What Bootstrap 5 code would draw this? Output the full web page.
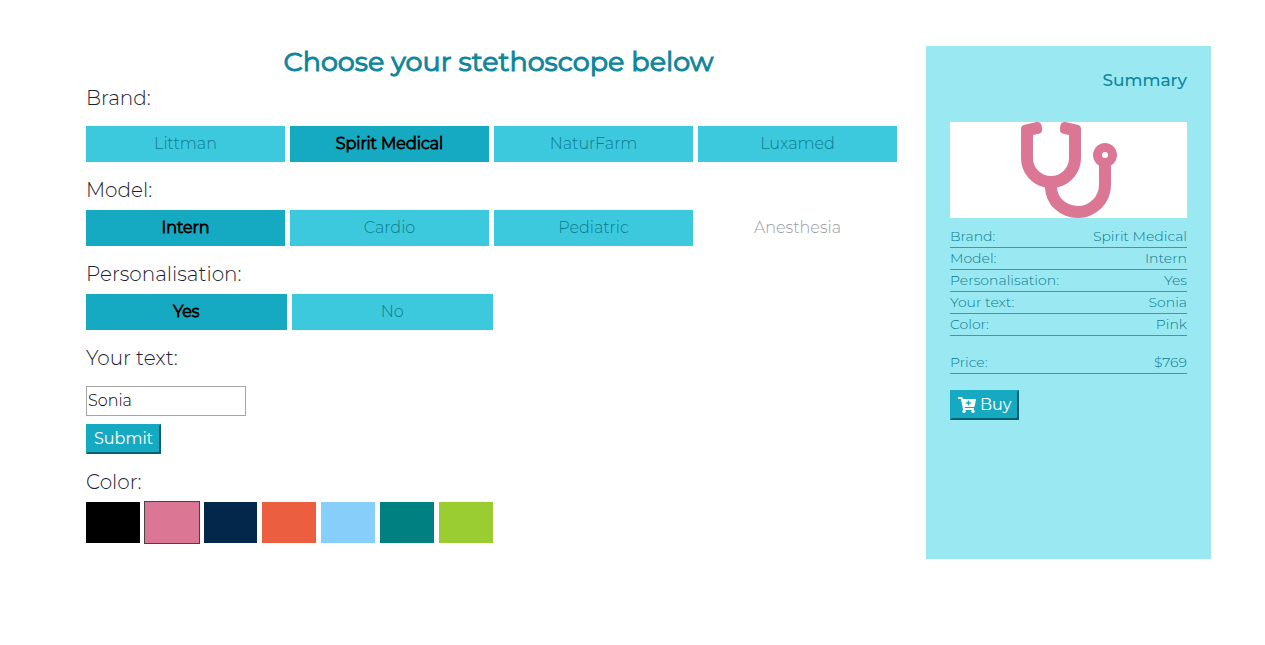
<!DOCTYPE html>
<html lang="en">
<head>
<meta charset="utf-8">
<meta name="viewport" content="width=device-width, initial-scale=1">
<title>Choose your stethoscope</title>
<link rel="stylesheet" href="https://cdn.jsdelivr.net/npm/bootstrap@5.3.0/dist/css/bootstrap.min.css">
<style>
  :root { --teal: #16aac2; --teal-light: #3dc9dd; --teal-dark: #0d869b; --ice: #9ae9f2; }
  body { font-family: Montserrat, Inter, "Open Sans", sans-serif; font-weight: 300; color: #000; }
  .page { padding: 46px 54px 46px 86px; }
  .shop { display: grid; grid-template-columns: 1fr; gap: 29px; }
  @media (min-width: 768px) { .shop { grid-template-columns: 74fr 26fr; } }
  .main-title { font-size: 27px; line-height: 32px; font-weight: 400; -webkit-text-stroke: 1px; color: var(--teal-dark); padding-left: 14px; }
  .group-title { font-size: 20px; line-height: 24px; float: none; color: #1b2033; }
  .choices { display: grid; grid-template-columns: repeat(4, 1fr); gap: 5px; }
  .half { width: calc(50% + 1px); min-width: 280px; }
  .choices.two { grid-template-columns: repeat(2, 1fr); }
  .choices.seven { grid-template-columns: repeat(7, 1fr); }
  .choice { height: 36px; line-height: 35px; font-size: 16px; text-align: center; background: var(--teal-light); color: #0b7b8f; cursor: pointer; }
  .btn-check:checked + .choice { background: var(--teal); color: #000; -webkit-text-stroke: 1px; }
  .btn-check:disabled + .choice { background: none; color: #999ba3; cursor: default; opacity: 1; }
  .btn-check:focus-visible + label { outline: 2px solid #000; }
  .swatch { height: 41px; cursor: pointer; }
  .btn-check:checked + .swatch { outline: 1px solid #444; }
  .engraving { width: 160px; height: 30px; padding: 0 1px 2px; border: 1px solid #a5a5a5; font-size: 16px; font-weight: 300; color: #000; }
  .action { height: 30px; padding: 0 6px; line-height: 24px; font-size: 16px; font-weight: 400; color: #fff; background: var(--teal); border: 2px solid; border-color: var(--teal) #0b5f6d #0b5f6d var(--teal); }
  .summary { background: var(--ice); color: var(--teal-dark); }
  .summary-title { font-size: 17px; line-height: 20px; font-weight: 500; }
  .preview { height: 96px; }
  .details { font-size: 14px; line-height: 20px; color: #0b7b8f; }
  .details th { font-weight: inherit; }
  .details tr { border-bottom: 1px solid var(--teal); }
  .details th, .details td { padding: 0 0 1px; }
</style>
</head>
<body>
<div class="page">
  <div class="shop">
    <main class="pb-3">
      <h1 class="main-title text-center mb-2">Choose your stethoscope below</h1>
      <form onsubmit="return false">
        <fieldset class="mb-3">
          <legend class="group-title mb-3">Brand:</legend>
          <div class="choices">
            <input class="btn-check" type="radio" name="brand" id="b1"><label class="choice" for="b1">Littman</label>
            <input class="btn-check" type="radio" name="brand" id="b2" checked><label class="choice" for="b2">Spirit Medical</label>
            <input class="btn-check" type="radio" name="brand" id="b3"><label class="choice" for="b3">NaturFarm</label>
            <input class="btn-check" type="radio" name="brand" id="b4"><label class="choice" for="b4">Luxamed</label>
          </div>
        </fieldset>
        <fieldset class="mb-3">
          <legend class="group-title mb-2">Model:</legend>
          <div class="choices">
            <input class="btn-check" type="radio" name="model" id="m1" checked><label class="choice" for="m1">Intern</label>
            <input class="btn-check" type="radio" name="model" id="m2"><label class="choice" for="m2">Cardio</label>
            <input class="btn-check" type="radio" name="model" id="m3"><label class="choice" for="m3">Pediatric</label>
            <input class="btn-check" type="radio" name="model" id="m4" disabled><label class="choice" for="m4">Anesthesia</label>
          </div>
        </fieldset>
        <fieldset class="mb-3">
          <legend class="group-title mb-2">Personalisation:</legend>
          <div class="choices two half">
            <input class="btn-check" type="radio" name="personal" id="p1" checked><label class="choice" for="p1">Yes</label>
            <input class="btn-check" type="radio" name="personal" id="p2"><label class="choice" for="p2">No</label>
          </div>
        </fieldset>
        <div class="d-flex flex-column align-items-start mb-3">
          <label class="group-title mb-3" for="engraving">Your text:</label>
          <input class="engraving mb-2" type="text" id="engraving" value="Sonia">
          <button class="action" type="submit">Submit</button>
        </div>
        <fieldset>
          <legend class="group-title mb-2">Color:</legend>
          <div class="choices seven half">
            <input class="btn-check" type="radio" name="color" id="c1"><label class="swatch" for="c1" aria-label="Black" style="background:#000"></label>
            <input class="btn-check" type="radio" name="color" id="c2" checked><label class="swatch" for="c2" aria-label="Pink" style="background:#db7695"></label>
            <input class="btn-check" type="radio" name="color" id="c3"><label class="swatch" for="c3" aria-label="Navy" style="background:#02274b"></label>
            <input class="btn-check" type="radio" name="color" id="c4"><label class="swatch" for="c4" aria-label="Orange" style="background:#eb5e40"></label>
            <input class="btn-check" type="radio" name="color" id="c5"><label class="swatch" for="c5" aria-label="Light blue" style="background:#87cefa"></label>
            <input class="btn-check" type="radio" name="color" id="c6"><label class="swatch" for="c6" aria-label="Teal" style="background:#008080"></label>
            <input class="btn-check" type="radio" name="color" id="c7"><label class="swatch" for="c7" aria-label="Green" style="background:#9acd32"></label>
          </div>
        </fieldset>
      </form>
    </main>
    <aside class="summary p-4">
      <h2 class="summary-title text-end pb-3 mb-3">Summary</h2>
      <div class="preview bg-white d-flex justify-content-center mb-2">
        <svg width="96" height="96" viewBox="0 0 96 96" fill="#db7695" aria-hidden="true">
          <path d="M0 7Q0 3.500 3.500 2.700L15.500.1Q19.500-.5 20.600 3.500L21.100 7Q21.400 10.800 18 11.800L12 13V36a18 18 0 0 0 36 0V13l-6-1.200Q38.600 10.800 38.900 7L39.400 3.500Q40.500-.5 44.500.1L56.500 2.700Q60 3.500 60 7V36a30 30 0 0 1-24 29.400A21 19 0 0 0 57 84A21 21 0 0 0 78 63V43.400a12 12 0 1 1 12 0V63A33 33 0 0 1 57 96A33 31 0 0 1 24 65.400A30 30 0 0 1 0 36ZM84 30a3 3 0 1 0 0 6a3 3 0 1 0 0-6Z"/>
        </svg>
      </div>
      <table class="details w-100">
        <tbody>
          <tr><th scope="row">Brand:</th><td class="text-end">Spirit Medical</td></tr>
          <tr><th scope="row">Model:</th><td class="text-end">Intern</td></tr>
          <tr><th scope="row">Personalisation:</th><td class="text-end">Yes</td></tr>
          <tr><th scope="row">Your text:</th><td class="text-end">Sonia</td></tr>
          <tr><th scope="row">Color:</th><td class="text-end">Pink</td></tr>
        </tbody>
      </table>
      <table class="details w-100 my-3">
        <tbody><tr><th scope="row">Price:</th><td class="text-end">$769</td></tr></tbody>
      </table>
      <button class="action d-flex align-items-center gap-1" type="button">
        <svg width="18" height="16" viewBox="0 0 576 512" fill="currentColor" aria-hidden="true"><path d="M504.717 320H211.572l6.545 32h268.418c15.401 0 26.816 14.301 23.403 29.319l-5.517 24.276C523.112 414.668 536 433.828 536 456c0 31.202-25.519 56.444-56.824 55.994-29.823-.429-54.35-24.631-55.155-54.447-.44-16.287 6.085-31.049 16.803-41.548H231.176C241.553 426.165 248 440.326 248 456c0 31.813-26.528 57.431-58.67 55.938-28.54-1.325-51.751-24.385-53.251-52.917-1.158-22.034 10.436-41.455 28.051-51.586L93.883 64H24C10.745 64 0 53.255 0 40V24C0 10.745 10.745 0 24 0h102.529c11.401 0 21.228 8.021 23.513 19.19L159.208 64H551.99c15.401 0 26.816 14.301 23.403 29.319l-47.273 208C525.637 312.246 515.923 320 504.717 320zM408 168h-48v-40c0-8.837-7.163-16-16-16h-16c-8.837 0-16 7.163-16 16v40h-48c-8.837 0-16 7.163-16 16v16c0 8.837 7.163 16 16 16h48v40c0 8.837 7.163 16 16 16h16c8.837 0 16-7.163 16-16v-40h48c8.837 0 16-7.163 16-16v-16c0-8.837-7.163-16-16-16z"/></svg>
        Buy
      </button>
    </aside>
  </div>
</div>
<script src="https://cdn.jsdelivr.net/npm/bootstrap@5.3.0/dist/js/bootstrap.bundle.min.js"></script>
</body>
</html>
